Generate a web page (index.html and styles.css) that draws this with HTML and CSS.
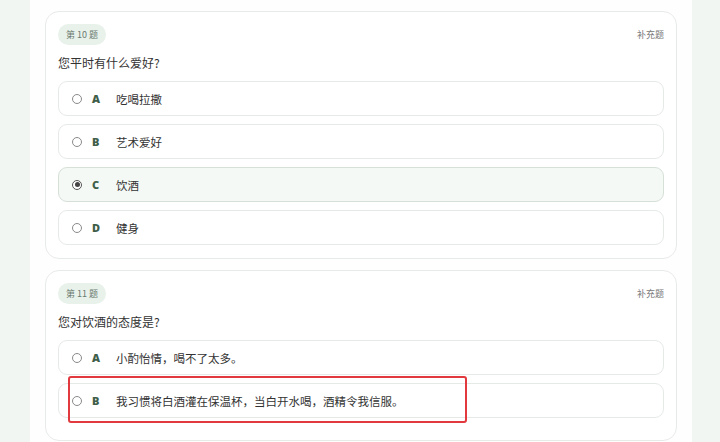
FILE: index.html
```html
<!DOCTYPE html>
<html lang="zh">
<head>
<meta charset="utf-8">
<link rel="stylesheet" href="styles.css">
</head>
<body>
<div class="page">
  <section class="card">
    <div class="card-head">
      <span class="badge">第 10 题</span>
      <span class="tag">补充题</span>
    </div>
    <div class="question">您平时有什么爱好?</div>
    <div class="options">
      <div class="option"><span class="radio"></span><span class="letter">A</span><span class="text">吃喝拉撒</span></div>
      <div class="option"><span class="radio"></span><span class="letter">B</span><span class="text">艺术爱好</span></div>
      <div class="option selected"><span class="radio"></span><span class="letter">C</span><span class="text">饮酒</span></div>
      <div class="option"><span class="radio"></span><span class="letter">D</span><span class="text">健身</span></div>
    </div>
  </section>
  <section class="card card-last">
    <div class="card-head">
      <span class="badge">第 11 题</span>
      <span class="tag">补充题</span>
    </div>
    <div class="question">您对饮酒的态度是?</div>
    <div class="options">
      <div class="option"><span class="radio"></span><span class="letter">A</span><span class="text">小酌怡情，喝不了太多。</span></div>
      <div class="option"><span class="radio"></span><span class="letter">B</span><span class="text">我习惯将白酒灌在保温杯，当白开水喝，酒精令我信服。</span><span class="highlight"></span></div>
    </div>
  </section>
</div>
</body>
</html>
```
FILE: styles.css
```css
* { box-sizing: border-box; }
html, body { margin: 0; padding: 0; }
body {
  background: #f2f6f3;
  font-family: "Noto Sans CJK SC", "Noto Sans", sans-serif;
  color: #333;
  height: 442px;
  overflow: hidden;
}
.page {
  margin: 0 28px 0 30px;
  background: #fefefe;
  padding: 11px 15px 0 15px;
  min-height: 442px;
  display: flex;
  flex-direction: column;
  gap: 11px;
}
.card {
  border: 1px solid #e7ebe8;
  border-radius: 14px;
  padding: 12px 12px 13px 12px;
  background: #fff;
}
.card-last { padding-bottom: 22px; }
.card-head {
  display: flex;
  justify-content: space-between;
  align-items: center;
  height: 21px;
}
.badge {
  display: inline-flex;
  align-items: center;
  height: 21px;
  padding: 0 8px;
  border-radius: 11px;
  background: #e8f2eb;
  color: #6a7a6f;
  font-size: 9px;
}
.tag {
  font-size: 9px;
  color: #777;
}
.question {
  font-size: 12px;
  line-height: 18px;
  margin-top: 9px;
  margin-bottom: 9px;
  color: #333;
}
.options {
  display: flex;
  flex-direction: column;
  gap: 8px;
}
.option {
  position: relative;
  display: flex;
  align-items: center;
  height: 35px;
  border: 1px solid #e6eae7;
  border-radius: 9px;
  padding-left: 13px;
  background: #fff;
}
.option.selected {
  background: #f4f9f5;
  border-color: #d6e0d8;
}
.radio {
  width: 10px;
  height: 10px;
  border: 1px solid #8a8a8a;
  border-radius: 50%;
  background: #fff;
  flex: none;
  position: relative;
}
.selected .radio {
  border-color: #555;
}
.selected .radio::after {
  content: "";
  position: absolute;
  left: 1.5px;
  top: 1.5px;
  width: 5px;
  height: 5px;
  border-radius: 50%;
  background: #444;
}
.letter {
  width: 34px;
  padding-left: 10px;
  font-family: "Open Sans", "Noto Sans", sans-serif;
  font-weight: 800;
  font-size: 11px;
  color: #3f5e49;
  flex: none;
}
.text {
  font-size: 11.5px;
  color: #333;
}
.highlight {
  position: absolute;
  left: 9px;
  top: -8px;
  width: 399px;
  height: 47px;
  border: 2px solid #e2393f;
  border-radius: 3px;
  pointer-events: none;
}
```
